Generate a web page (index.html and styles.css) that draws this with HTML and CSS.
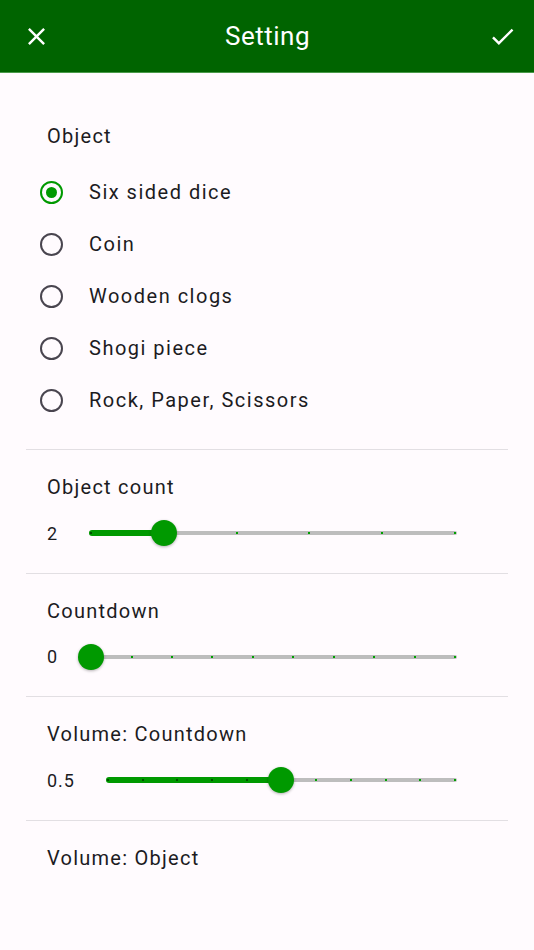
FILE: index.html
```html
<!DOCTYPE html>
<html lang="en">
<head>
<meta charset="utf-8">
<title>Setting</title>
<link rel="stylesheet" href="styles.css">
</head>
<body>
<header class="appbar">
  <button class="icon-btn close" aria-label="Close">
    <svg viewBox="0 0 24 24" width="29" height="29"><path fill="#fff" d="M19 6.41L17.59 5 12 10.59 6.41 5 5 6.41 10.59 12 5 17.59 6.41 19 12 13.41 17.59 19 19 17.59 13.41 12z"/></svg>
  </button>
  <h1 class="title">Setting</h1>
  <button class="icon-btn check" aria-label="Save">
    <svg viewBox="0 0 24 24" width="29" height="29"><path fill="#fff" d="M9 16.17L4.83 12l-1.42 1.41L9 19 21 7l-1.41-1.41z"/></svg>
  </button>
</header>

<main class="content">
  <section class="section first">
    <div class="label">Object</div>
    <ul class="radios">
      <li class="radio-row"><span class="radio checked"></span><span class="radio-text">Six sided dice</span></li>
      <li class="radio-row"><span class="radio"></span><span class="radio-text">Coin</span></li>
      <li class="radio-row"><span class="radio"></span><span class="radio-text">Wooden clogs</span></li>
      <li class="radio-row"><span class="radio"></span><span class="radio-text">Shogi piece</span></li>
      <li class="radio-row"><span class="radio"></span><span class="radio-text">Rock, Paper, Scissors</span></li>
    </ul>
  </section>

  <section class="section">
    <div class="label">Object count</div>
    <div class="slider-row">
      <span class="value">2</span>
      <div class="slider">
        <div class="track"></div>
        <div class="active" style="width:20%"></div>
        <span class="tick on" style="left:0%"></span>
        <span class="tick" style="left:20%"></span>
        <span class="tick" style="left:40%"></span>
        <span class="tick" style="left:60%"></span>
        <span class="tick" style="left:80%"></span>
        <span class="tick" style="left:100%"></span>
        <span class="thumb" style="left:20%"></span>
      </div>
    </div>
  </section>

  <section class="section">
    <div class="label">Countdown</div>
    <div class="slider-row">
      <span class="value">0</span>
      <div class="slider">
        <div class="track"></div>
        <span class="tick" style="left:11.111%"></span>
        <span class="tick" style="left:22.222%"></span>
        <span class="tick" style="left:33.333%"></span>
        <span class="tick" style="left:44.444%"></span>
        <span class="tick" style="left:55.556%"></span>
        <span class="tick" style="left:66.667%"></span>
        <span class="tick" style="left:77.778%"></span>
        <span class="tick" style="left:88.889%"></span>
        <span class="tick" style="left:100%"></span>
        <span class="thumb" style="left:0%"></span>
      </div>
    </div>
  </section>

  <section class="section">
    <div class="label">Volume: Countdown</div>
    <div class="slider-row">
      <span class="value">0.5</span>
      <div class="slider">
        <div class="track"></div>
        <div class="active" style="width:50%"></div>
        <span class="tick on" style="left:0%"></span>
        <span class="tick on" style="left:10%"></span>
        <span class="tick on" style="left:20%"></span>
        <span class="tick on" style="left:30%"></span>
        <span class="tick on" style="left:40%"></span>
        <span class="tick" style="left:60%"></span>
        <span class="tick" style="left:70%"></span>
        <span class="tick" style="left:80%"></span>
        <span class="tick" style="left:90%"></span>
        <span class="tick" style="left:100%"></span>
        <span class="thumb" style="left:50%"></span>
      </div>
    </div>
  </section>

  <section class="section last">
    <div class="label">Volume: Object</div>
  </section>
</main>
</body>
</html>
```

FILE: styles.css
```css
* { box-sizing: border-box; }

html, body {
  margin: 0;
  padding: 0;
  background: #fffbfe;
  font-family: Roboto, "Liberation Sans", sans-serif;
  color: #1c1b1f;
}

.appbar {
  height: 73px;
  background: #006400;
  border-bottom: 1px solid #4a9a4a;
  display: grid;
  grid-template-columns: 1fr auto 1fr;
  align-items: center;
  padding: 0 17px 0 22px;
}

.icon-btn {
  width: 29px;
  height: 29px;
  padding: 0;
  border: 0;
  background: none;
  display: flex;
}

.check {
  justify-self: end;
}

.title {
  margin: 0 0 0 -4px;
  font-size: 26px;
  font-weight: 400;
  color: #fff;
  letter-spacing: 0.5px;
}

.content {
  padding: 0 26px;
}

.section {
  border-bottom: 1px solid #e2dfe3;
  padding: 23px 0 19.5px;
}

.section.first {
  padding: 49px 0 23px;
}

.section.last {
  border-bottom: 0;
}

.label {
  padding-left: 21px;
  font-size: 20px;
  line-height: 28px;
  letter-spacing: 1.25px;
}

.radios {
  list-style: none;
  margin: 16px 0 0;
  padding: 0;
}

.radio-row {
  height: 52px;
  display: flex;
  align-items: center;
}

.radio {
  width: 23px;
  height: 23px;
  margin-left: 14px;
  border: 2.5px solid #49454f;
  border-radius: 50%;
  display: flex;
  align-items: center;
  justify-content: center;
}

.radio.checked {
  border-color: #009900;
}

.radio.checked::after {
  content: "";
  width: 11px;
  height: 11px;
  border-radius: 50%;
  background: #009900;
}

.radio-text {
  margin-left: 26px;
  font-size: 20px;
  letter-spacing: 1.5px;
}

.slider-row {
  margin-top: 12px;
  height: 40px;
  display: flex;
  align-items: center;
  padding: 0 53px 0 21px;
}

.value {
  font-size: 18px;
  letter-spacing: 1px;
  margin-right: 33px;
}

.slider {
  position: relative;
  flex: 1;
  height: 40px;
}

.track {
  position: absolute;
  left: -2px;
  right: -2px;
  top: 18px;
  height: 4px;
  border-radius: 2px;
  background: #bdbdbd;
}

.active {
  position: absolute;
  left: -2px;
  top: 17px;
  height: 6px;
  border-radius: 3px;
  background: #009900;
}

.tick {
  position: absolute;
  top: 19px;
  width: 2px;
  height: 2px;
  margin-left: -1px;
  background: #00a000;
}

.tick.on {
  background: #005000;
}

.thumb {
  position: absolute;
  top: 7px;
  width: 26px;
  height: 26px;
  margin-left: -13px;
  border-radius: 50%;
  background: #009900;
  box-shadow: 0 1px 3px rgba(0, 0, 0, 0.3);
}
```
